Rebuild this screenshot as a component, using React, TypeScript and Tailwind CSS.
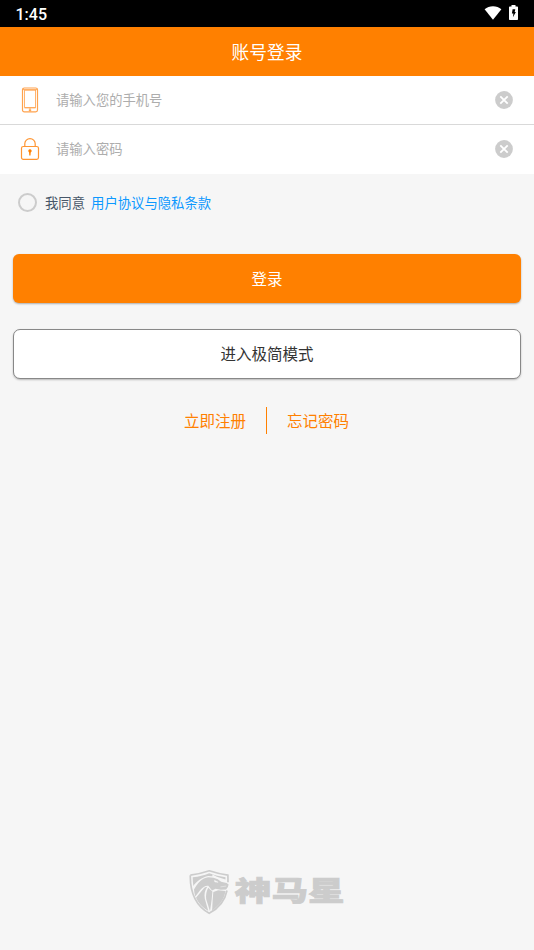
import type { ReactNode } from 'react';

function StatusBar() {
  return (
    <div className="flex h-[27px] items-center justify-between bg-black pr-[16px] pl-[15.5px] text-white">
      <span className="pt-[2px] font-['Roboto','Liberation_Sans',sans-serif] text-[16px] leading-[22px] font-medium">
        1:45
      </span>
      <div className="flex h-full items-start gap-[7px] pt-[5px]">
        <svg className="mt-px" width="18" height="14" viewBox="0 0 18 14" fill="currentColor">
          <path d="M9 13.8.6 3.3C3 1.3 5.8.3 9 .3s6 1 8.400 3L9 13.800Z" />
        </svg>
        <svg width="9" height="15" viewBox="0 0 9 15">
          <path d="M2.500 0h4v1.500H8c.6 0 1 .4 1 1V14c0 .6-.4 1-1 1H1c-.6 0-1-.4-1-1V2.500c0-.6.4-1 1-1h1.500Z" fill="#fff" />
          <path d="M3.600 4.200h2.700L5.700 7h1.200l-3 5.200.5-3.800H2.900Z" fill="#000" />
        </svg>
      </div>
    </div>
  );
}

function PhoneIcon() {
  return (
    <svg width="18" height="26" viewBox="0 0 18 26" fill="none" stroke="#ffa24d">
      <rect x="1.500" y="1" width="15" height="23.800" rx="1.800" strokeWidth="1.200" />
      <rect x="3.600" y="3.200" width="11" height="17.200" strokeWidth="0.800" />
      <path d="M2 2.600h14M3.500 20.900h11M9 21v3.500" strokeWidth="0.900" />
      <path d="M7.800 23.200h2.400" strokeWidth="1.400" />
    </svg>
  );
}

function LockIcon() {
  return (
    <svg width="20" height="24" viewBox="0 0 20 24" fill="none" stroke="#ff9633" strokeWidth="1.200">
      <rect x="1.500" y="9.500" width="17" height="12.900" rx="1.800" />
      <path d="M4.800 9.500V6.800a5.200 5.200 0 0 1 10.400 0v2.700" />
      <path d="M8.300 14.300a1.700 1.700 0 1 1 2.400 1.200l-.2 2.900H9.300l-.2-2.900Z" fill="#ff8000" stroke="none" />
    </svg>
  );
}

function ClearIcon() {
  return (
    <svg width="18" height="18" viewBox="0 0 18 18">
      <circle cx="9" cy="9" r="8.900" fill="#ccc" />
      <path d="m5.300 5.300 7.400 7.400m0-7.400-7.400 7.400" stroke="#fff" strokeWidth="1.800" />
    </svg>
  );
}

interface FieldProps {
  icon: ReactNode;
  type: string;
  placeholder: string;
}

function Field({ icon, type, placeholder }: FieldProps) {
  return (
    <div className="flex h-[48px] items-center pr-[21px] pl-[18px]">
      <span className="flex w-[24px] justify-center">{icon}</span>
      <input
        type={type}
        placeholder={placeholder}
        className="ml-[14px] min-w-0 flex-1 bg-transparent text-[13.300px] outline-none placeholder:text-[#adadad]"
      />
      <button type="button">
        <ClearIcon />
      </button>
    </div>
  );
}

function Logo() {
  return (
    <svg className="mx-auto block" width="156" height="48" viewBox="0 0 156 48">
      {/* shield */}
      <path
        d="M1.300 6.200Q11 5 20.300 1.800 30 5 38.900 6.200l.1 7M38 21.500c-2 10-7.500 17.300-17.800 22.800C7.300 37 1 24 1.300 6.200"
        fill="none"
        stroke="#ccc"
        strokeWidth="1.700"
      />
      <g fill="#ccc">
        {/* mane */}
        <path d="M3.700 8.200C10 7.600 15 6.300 20.200 4.200l7 2.300 9.300 1.800v2.200l-8.700-2.700-4.300-2.300-.2 1.800-4-.2C13 8.200 7.200 12.800 4.400 17c-.5-3-.7-5.800-.7-8.800Z" />
        {/* head */}
        <path d="M5 20.500C8.500 14.300 13 9 19.300 8.300l5.200.4 4.300 1.500 3.300 2.600 5.500 1.200 2 1.500-.7 2.500-1.800 2.600-5.400.2-5.200-1-3.500 1.600-3.700-4.600c-3-.4-5.500 1.300-8 4.300L6.300 27.500C5.600 25 5.100 22.800 5 20.500Z" />
        {/* neck */}
        <path d="M7 28.800 14.300 20c1.200-1.500 2.500-2.300 4-2.200-2.500 3.500-3.300 7.200-2.500 12l3.500 12.300C13.500 38.700 9.500 34.500 7 28.800Z" />
        <path d="M19.200 18.800 23.400 22.600l-.7 7.600L21 42.200l-3.800-12c-.5-4 .2-8 2-11.400Z" />
        <path d="m24.300 23 4.900-1.700 7.400.8c-1.700 8.500-5.800 14.300-13.500 19.300l.5-9.200Z" />
      </g>
      <path d="m25.500 11.300 3.600 1.900-3.300-.3ZM31.500 17.900l5.700-.8" fill="#f6f6f6" stroke="#f6f6f6" strokeWidth="0.500" />
      <text
        transform="translate(45.800 32.100) scale(1.220 0.920)"
        textLength="90"
        fill="#ccc"
        stroke="#ccc"
        strokeWidth="0.800"
        className="font-['Noto_Sans_CJK_SC',sans-serif] text-[30px] font-black"
      >
        神马星
      </text>
    </svg>
  );
}

export default function App() {
  return (
    <div className="flex h-[950px] w-full flex-col bg-[#f6f6f6] font-['Noto_Sans_CJK_SC',sans-serif] text-[#333]">
      <StatusBar />
      <header className="flex h-[49px] items-center justify-center bg-[#ff8000] pb-[2px] text-[17.700px] leading-[24px] text-white">
        账号登录
      </header>

      <form className="flex flex-col">
        <div className="flex h-[98px] flex-col bg-white">
          <Field icon={<PhoneIcon />} type="tel" placeholder="请输入您的手机号" />
          <div className="h-px bg-[#d9d9d9]" />
          <Field icon={<LockIcon />} type="password" placeholder="请输入密码" />
        </div>

        <div className="flex h-[56px] items-center pl-[18px] text-[13.350px] leading-[20px]">
          <span className="size-[19px] rounded-full border-2 border-[#ccc]" />
          <span className="ml-[8px] pt-[2px] text-[#475669]">我同意</span>
          <a className="ml-[6px] pt-[2px] text-[#0c98ff]">用户协议与隐私条款</a>
        </div>

        <div className="mt-[24px] flex flex-col gap-[27px] px-[13px] text-[15.500px]">
          <button
            type="button"
            className="h-[49px] rounded-[6px] bg-[#ff8000] text-white shadow-[0_1px_2px_rgba(0,0,0,0.3)]"
          >
            登录
          </button>
          <button
            type="button"
            className="-mt-px h-[50px] rounded-[7px] border border-[#888] bg-white shadow-[0_1px_2px_rgba(0,0,0,0.25)]"
          >
            进入极简模式
          </button>
        </div>
      </form>

      <div className="mt-[28px] flex h-[27px] items-center justify-center pr-px text-[15.500px] leading-[24px] text-[#ff8000]">
        <a className="pb-[2px]">立即注册</a>
        <span className="mx-[20px] h-full w-px bg-[#ff8000]" />
        <a className="pb-[2px]">忘记密码</a>
      </div>

      <footer className="mt-auto pb-[33px]">
        <Logo />
      </footer>
    </div>
  );
}
